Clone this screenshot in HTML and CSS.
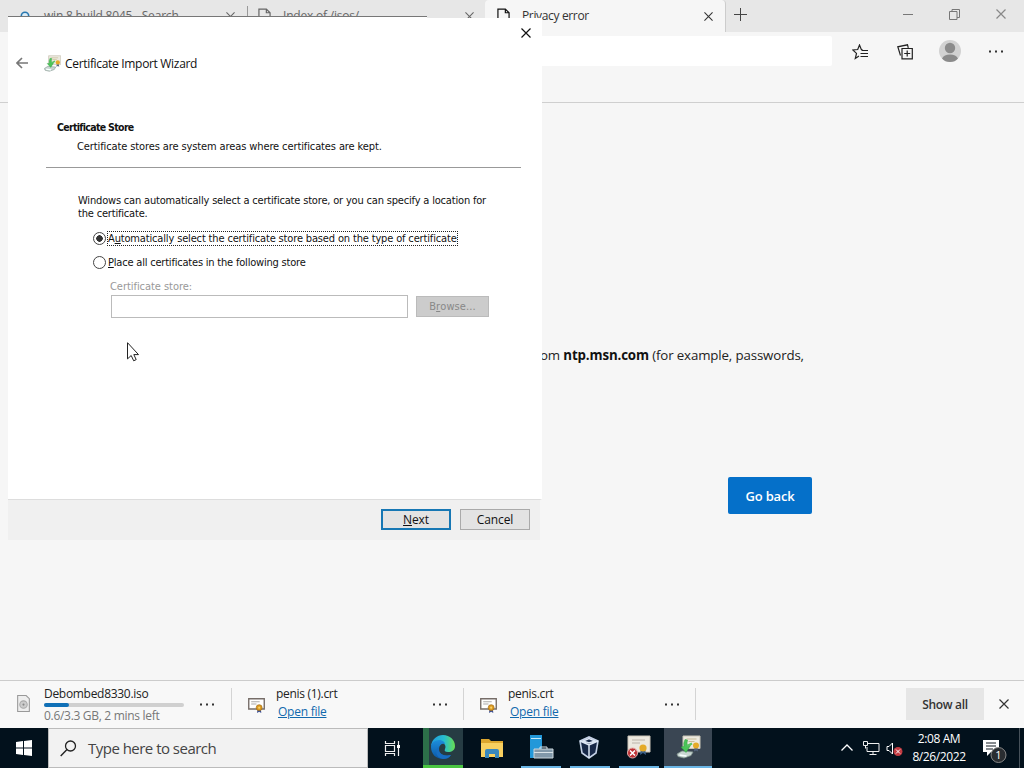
FILE: index.html
```html
<!DOCTYPE html>
<html lang="en">
<head>
<meta charset="utf-8">
<title>Privacy error</title>
<link rel="stylesheet" href="styles.css">
</head>
<body>
<svg width="0" height="0" class="defs">
  <symbol id="page" viewBox="0 0 14 16"><path d="M1 .5h8l4 4v11H1zM9 .5v4h4" fill="none" stroke="currentColor" stroke-width="1.3"/></symbol>
  <symbol id="x" viewBox="0 0 10 10"><path d="M.5.5l9 9M9.5.5l-9 9" fill="none" stroke="currentColor" stroke-width="1.2"/></symbol>
  <symbol id="dots" viewBox="0 0 14 3"><path d="M0 .5h2v2H0zM6 .5h2v2H6zM12 .5h2v2h-2z" fill="currentColor"/></symbol>
  <symbol id="cert" viewBox="0 0 16 14"><path d="M.7.7h14.6v9.6H.7z" fill="#fff" stroke="#766d68" stroke-width="1.3"/><path d="M3 3.5h8M3 5.5h5" stroke="#aaa"/><path d="M9 9l-.5 5 2-1.2 2 1.2L12 9z" fill="#3c4f91"/><circle cx="10.5" cy="9" r="2.8" fill="#dc9a20" stroke="#9c6a17" stroke-width=".6"/><circle cx="10.5" cy="9" r="1" fill="#f6d36b"/></symbol>
  <symbol id="wizard" viewBox="0 0 24 24"><path d="M6.500 1H23.500v12.500h-17z" fill="#ece9df" stroke="#c9c5b7"/><path d="M10 4h10M12 6.500h6" stroke="#c9bd98"/><path d="M18 13l-.5 3.500 2-1 2 1-.5-3.500z" fill="#56657f"/><circle cx="19.500" cy="10.500" r="3" fill="#e5ab28"/><path d="M.5 19l5-3 11 1-2 3.500-7 2.500-6-1.500z" fill="#c9d6d2" stroke="#82948e" stroke-width=".8"/><path d="M3 20l7 1" stroke="#f8ffff" stroke-width="1.600"/><path d="M8.500 4.500l2.500.5q-1 3 0 6l3-.5-4.500 7-5-5.500 3-.5q-1-3 1-7z" fill="#4bc458" stroke="#2f9a40" stroke-width=".5"/><path d="M10.500 11l5-2.500" stroke="#5bc564" stroke-width="2"/></symbol>
</svg>
<div class="desktop">
  <main class="browser">
    <div class="tabs">
      <div class="tab first"><svg class="search-dot" viewBox="0 0 10 10"><circle cx="5" cy="5" r="3.700" fill="#dcecf6" stroke="#2878b0" stroke-width="1.600"/></svg><span>win 8 build 8045 - Search</span><svg class="tab-x"><use href="#x"/></svg></div>
      <div class="tab second"><svg class="page"><use href="#page"/></svg><span>Index of /isos/</span><svg class="tab-x"><use href="#x"/></svg></div>
      <div class="tab active"><svg class="page"><use href="#page"/></svg><span>Privacy error</span><svg class="tab-x"><use href="#x"/></svg></div>
      <svg class="plus" viewBox="0 0 14 14"><path d="M6.500 0v13M0 6.500h13" stroke="#444"/></svg>
      <div class="window-controls"><svg width="10" height="11" viewBox="0 0 10 11"><path d="M0 5.500h10" stroke="#777"/></svg><svg width="11" height="11" viewBox="0 0 11 11"><path d="M.5 2.500h7.500v8H.5zM3 2.500v-2h7.500v8H8" fill="none" stroke="#777"/></svg><svg width="10" height="10" class="win-x"><use href="#x"/></svg></div>
    </div>
    <div class="toolbar">
      <div class="address"></div>
      <svg class="fav" viewBox="0 0 17 16"><path d="M10.500 5.500L9.300 5.500 7.500 1 5.700 5.500.8 6l3.700 3.400L3.300 14.500 7 12M9.500 6.500H16M8.500 9.500H16M8.500 12.500H16" fill="none" stroke="#222" stroke-width="1.200"/></svg>
      <svg class="collect" viewBox="0 0 16 16"><path d="M5 4.500h10.300v10.300H5zM10.200 6.500v6M7.200 9.500h6M3.500 11.500L.8 2.800 10.500.8l.8 3" fill="none" stroke="#222" stroke-width="1.200"/></svg>
      <svg class="avatar" viewBox="0 0 22 22"><circle cx="11" cy="11" r="11" fill="#d2d2d2"/><circle cx="11" cy="8" r="5.200" fill="#8b8b8b"/><path d="M3 18.500q2-4 8-4t8 4q-3 3.500-8 3.500t-8-3.500z" fill="#8b8b8b"/></svg>
      <svg class="dots"><use href="#dots"/></svg>
    </div>
    <div class="content">
      <p class="warning">om <b>ntp.msn.com</b> (for example, passwords,</p>
      <button class="go-back">Go back</button>
    </div>
    <div class="downloads">
      <div class="download progress-item">
        <svg class="iso" viewBox="0 0 12 16"><path d="M.5.500h8l3 3v12H.5z" fill="#eee" stroke="#999"/><circle cx="6" cy="9" r="3.500" fill="#ccc" stroke="#aaa"/><circle cx="6" cy="9" r="1" fill="#888"/></svg>
        <div class="info"><div class="name">Debombed8330.iso</div><div class="track"><div class="fill"></div></div><div class="status">0.6/3.3 GB, 2 mins left</div></div><svg class="dots"><use href="#dots"/></svg>
      </div>
      <div class="download"><svg class="cert"><use href="#cert"/></svg><div class="info"><div class="name">penis (1).crt</div><a class="link">Open file</a></div><svg class="dots"><use href="#dots"/></svg></div>
      <div class="download"><svg class="cert"><use href="#cert"/></svg><div class="info"><div class="name">penis.crt</div><a class="link">Open file</a></div><svg class="dots"><use href="#dots"/></svg></div>
      <button class="show-all">Show all</button><svg class="close-downloads"><use href="#x"/></svg>
    </div>
  </main>
  <footer class="taskbar">
    <div class="start"><svg width="16" height="16" viewBox="0 0 16 16"><path d="M0 2l7-1v6.500H0zM8 .900L16 0v7.500H8zM0 8.500h7V15l-7-1zM8 8.500h8V16l-8-1z" fill="#fff"/></svg></div>
    <div class="search"><svg viewBox="0 0 17 17"><circle cx="10.500" cy="6" r="5" fill="none" stroke="#222" stroke-width="1.300"/><path d="M7 9.500L.7 16" stroke="#222" stroke-width="1.400"/></svg><span>Type here to search</span></div>
    <div class="apps">
      <div class="app"><svg width="17" height="17" viewBox="0 0 17 17"><path d="M1.500 1v2.500h9V1M1.500 16v-2.500h9V16M1.500 5.500h9v6h-9zM14.500 1v15" fill="none" stroke="#eee" stroke-width="1.200"/><path d="M13 5h3v3h-3z" fill="#fff"/></svg></div>
      <div class="app edge"><svg width="26" height="26" viewBox="0 0 26 26"><defs><linearGradient id="g1" x2="1"><stop stop-color="#219bdc"/><stop offset=".55" stop-color="#27bed0"/><stop offset="1" stop-color="#68df50"/></linearGradient><linearGradient id="g2" y2="1" x2="0"><stop stop-color="#1d8edb"/><stop offset="1" stop-color="#0b57a6"/></linearGradient></defs><path d="M1 12C2 5 7 1 13 1c7 0 12 5 12 11 0 4-3 6-7 6-3 0-4-1-3-3 3-6-8-11-14-3z" fill="url(#g1)"/><path d="M1 13c0-4 4-7 8-7 3 0 6 2 6 4-3-1-6 1-6 5 0 5 5 8 12 6-2 3-5 4-8 4C6 25 1 20 1 13z" fill="url(#g2)"/><path d="M9 13c-2 5 3 10 12 8-2 3-5 4-8 4-7-1-9-9-4-12z" fill="#176dc1"/></svg></div>
      <div class="app"><svg width="22" height="19" viewBox="0 0 22 19"><path d="M0 0h8l2 2h12v16H0z" fill="#dca62e"/><path d="M0 4h22v14H0z" fill="#f8d060"/><path d="M4 19v-7q0-2 2-2h10q2 0 2 2v7h-4v-4H8v4z" fill="#3988bd"/></svg></div>
      <div class="app running"><svg width="25" height="24" viewBox="0 0 25 24"><path d="M1 0h12v23H1z" fill="#2298d9"/><path d="M2 3.500h10" stroke="#c4ebfa"/><path d="M5 14h19v9H5z" fill="#8198a9" stroke="#c9d6dc"/><path d="M11 14v-2h7v2M5 17.500h19" fill="none" stroke="#d8e2e7"/></svg></div>
      <div class="app running virtual"><svg width="20" height="23" viewBox="0 0 20 23"><path d="M1 5l9-4 9 4-2 12-7 5-7-5z" fill="#172847" stroke="#c4d1e5" stroke-width="1.600"/><path d="M1 5l9 4 9-4M10 9v13M4 5l6-2.500L16 5l-6 2z" fill="none" stroke="#dce6f4" stroke-width="1.500"/></svg></div>
      <div class="app running"><svg width="24" height="24" viewBox="0 0 24 24"><path d="M1 1h22v16H1z" fill="#ece8df" stroke="#cbc5b8"/><path d="M5 5h13M5 8h8" stroke="#bcb4aa"/><path d="M14 13l-1 7 3-2 3 2-1-7z" fill="#3c6189"/><circle cx="16" cy="13" r="3.600" fill="#e4aa28"/><circle cx="5.500" cy="18" r="5" fill="#bd3034" stroke="#e5b0ac"/><path d="M3 15.500l5 5M8 15.500l-5 5" stroke="#fff" stroke-width="1.500"/></svg></div>
      <div class="app running current"><svg width="25" height="24"><use href="#wizard"/></svg></div>
    </div>
    <div class="tray">
      <svg class="chev" viewBox="0 0 12 7"><path d="M.5 6.500L6 1l5.500 5.500" fill="none" stroke="#fff" stroke-width="1.300"/></svg>
      <svg class="network" viewBox="0 0 17 14"><path d="M5 2.500h11v8H4V6M10 10.500v3M6.500 13.500h7M.5.500h4v4h-4zM2.500 4.500v3" fill="none" stroke="#eee"/></svg>
      <svg class="volume" viewBox="0 0 17 14"><path d="M1 4.500h2L6.500 1v11L3 8.500H1z" fill="none" stroke="#fff"/><circle cx="12" cy="9.500" r="4.500" fill="#c33b42"/><path d="M10 7.500l4 4M14 7.500l-4 4" stroke="#fff"/></svg>
      <div class="clock"><span>2:08 AM</span><span class="date">8/26/2022</span></div>
      <svg class="notify" viewBox="0 0 25 26"><path d="M1 2h16v12H9l-4 4v-4H1z" fill="#fff"/><path d="M4 5h10M4 8h10M4 11h7" stroke="#101821"/><circle cx="16.500" cy="17" r="7.500" fill="#292d31" stroke="#888"/><text x="16.500" y="21" text-anchor="middle" fill="#fff" font-size="11">1</text></svg>
      <div class="desktop-edge"></div>
    </div>
  </footer>
  <section class="dialog">
    <div class="dialog-edge"></div>
    <svg class="dialog-close"><use href="#x"/></svg>
    <header class="wizard-head"><svg class="back" viewBox="0 0 12 12"><path d="M12 6H1M6 1L1 6l5 5" fill="none" stroke="#777" stroke-width="1.600"/></svg><svg class="wizard-icon"><use href="#wizard"/></svg><span>Certificate Import Wizard</span></header>
    <div class="wizard-body">
      <h1>Certificate Store</h1><p class="sub">Certificate stores are system areas where certificates are kept.</p>
      <div class="rule"></div>
      <p class="description">Windows can automatically select a certificate store, or you can specify a location for<br>the certificate.</p>
      <div class="option"><i class="radio selected"></i><span class="focused">A<u>u</u>tomatically select the certificate store based on the type of certificate</span></div>
      <div class="option option-two"><i class="radio"></i><span><u>P</u>lace all certificates in the following store</span></div>
      <p class="store-label">Certificate store:</p>
      <div class="store-row"><div class="store-input"></div><div class="browse">B<u>r</u>owse...</div></div>
    </div>
    <div class="wizard-footer"><button class="next"><span><u>N</u>ext</span></button><button><span>Cancel</span></button></div>
  </section>
  <svg class="cursor" viewBox="0 0 12 20"><path d="M.5.700v16.200l3.700-3.400 2.500 5.300 2.500-1.200-2.400-5h4.700z" fill="#fff" stroke="#222"/></svg>
</div>
</body>
</html>
```
FILE: styles.css
```css
* { box-sizing: border-box; }
body { margin: 0; font-family: "Open Sans", "Noto Sans", sans-serif; color: #222; }
p, h1 { margin: 0; }
button { font-family: inherit; padding: 0; border: 0; }
svg { flex: none; display: block; }
.defs { position: absolute; }
.desktop { position: relative; width: 1024px; height: 768px; overflow: hidden; white-space: nowrap; }
.browser { height: 728px; display: flex; flex-direction: column; background: #f6f6f6; }
.tabs { height: 32px; background: #e7e7e7; display: flex; flex: none; font-size: 12px; }
.tab { height: 32px; display: flex; align-items: center; color: #666; }
.tab span { line-height: 16px; }
.first { width: 247px; padding-left: 20px; }
.first span { width: 135px; margin-left: 14px; letter-spacing: -.2px; }
.search-dot { width: 10px; height: 10px; }
.first .tab-x { margin-left: 47px; }
.tab-x { width: 9px; height: 9px; }
.second { width: 238px; padding-left: 11px; }
.second::before { content: ""; width: 1px; height: 20px; background: #999; margin: 0 10px 0 -11px; }
.page { width: 13px; height: 16px; }
.second span { margin-left: 12px; width: 182px; letter-spacing: -.2px; }
.active { width: 241px; padding-left: 12px; background: #f6f6f6; color: #333; border-radius: 4px 4px 0 0; border-right: 1px solid #ccc; }
.active .page { color: #111; }
.active span { width: 182px; margin-left: 12px; letter-spacing: -.35px; }
.plus { width: 14px; height: 14px; margin: 8px 0 0 8px; }
.window-controls { margin: 9px 18px 0 auto; display: flex; gap: 36px; color: #888; }
.toolbar { height: 71px; flex: none; display: flex; align-items: flex-start; border-bottom: 1px solid #cfcfcf; padding-top: 4px; }
.address { width: 824px; margin-left: 8px; height: 30px; background: #fff; border-radius: 2px; }
.fav { width: 17px; height: 16px; margin: 8px 0 0 20px; }
.collect { width: 16px; height: 16px; margin: 8px 0 0 28px; }
.avatar { width: 22px; height: 22px; margin: 4px 0 0 26px; }
.toolbar .dots { margin: 14px 0 0 28px; }
.dots { width: 14px; height: 3px; color: #333; }
.content { flex: 1; padding: 243px 0 0 540px; }
.warning { font-size: 13.3px; line-height: 18px; letter-spacing: -.14px; }
.warning b { color: #111; }
.go-back { display: block; width: 84px; height: 37px; margin: 113px 0 0 188px; border-radius: 2px; color: #fff; background: #0570c9; font-size: 13px; font-weight: 600; letter-spacing: -.2px; }
.downloads { height: 48px; flex: none; border-top: 1px solid #ccc; background: #f8f8f8; display: flex; padding-top: 7px; }
.download { width: 232px; height: 32px; border-right: 1px solid #d4d4d4; display: flex; padding: 0 15px 0 16px; }
.cert { width: 17px; height: 15px; margin: 10px 11px 0 0; }
.info { flex: none; width: 157px; font-size: 12px; }
.name { line-height: 13px; margin-top: -1px; letter-spacing: -.3px; }
.link { display: block; margin: 5px 0 0 2px; line-height: 14px; color: #1169ad; text-decoration: underline; letter-spacing: -.25px; }
.download .dots { margin-top: 15px; }
.progress-item .iso { width: 13px; height: 17px; margin: 7px 13px 0 1px; }
.progress-item .iso + .info { margin-left: 1px; width: 156px; }
.track { width: 140px; height: 4px; border-radius: 2px; margin: 3px 0 2px; background: #d0d0d0; }
.fill { width: 25px; height: 4px; background: #1070b7; border-radius: 2px; }
.status { line-height: 14px; color: #777; font-size: 12px; letter-spacing: -.3px; }
.show-all { width: 78px; height: 32px; margin: 0 15px 0 auto; background: #e6e6e6; font-weight: 600; font-size: 12px; color: #333; letter-spacing: -.35px; }
.close-downloads { width: 10px; height: 10px; margin: 11px 15px 0 0; color: #333; }
.taskbar { height: 40px; display: flex; background: #02111c; color: #fff; }
.start { width: 48px; display: grid; place-items: center; }
.search { width: 320px; background: #f2f2f2; border: 1px solid #bbb; color: #444; display: flex; align-items: center; font-size: 15px; padding-left: 11px; }
.search svg { width: 17px; height: 17px; margin-right: 11px; }
.search span { letter-spacing: -.52px; }
.apps { display: flex; gap: 9px; margin-left: 4px; }
.app { width: 40px; height: 40px; display: grid; place-items: center; }
.app:first-child { margin-right: 2px; }
.edge { background: linear-gradient(90deg, #2c6f49 0 6px, #263c43 6px); border-bottom: 3px solid #4ac441; }
.running { border-bottom: 2px solid #6ab5e5; }
.virtual { padding-right: 3px; }
.current { background: #3a4653; width: 48px; margin-left: -4px; }
.tray { display: flex; margin-left: auto; }
.chev { width: 12px; height: 7px; margin: 16px 10px 0 0; }
.network { width: 17px; height: 14px; margin: 13px 6px 0 0; }
.volume { width: 17px; height: 14px; margin: 14px 8px 0 0; }
.clock { width: 56px; display: flex; flex-direction: column; align-items: center; font-size: 12px; line-height: 18px; padding-top: 2px; letter-spacing: -.4px; }
.notify { width: 25px; height: 26px; margin: 10px 0 0 15px; }
.desktop-edge { width: 5px; margin-left: 12px; border-left: 1px solid #46515a; }
.dialog { position: absolute; left: 8px; top: 16px; width: 534px; height: 524px; background: linear-gradient(#fff, #fff) 0 2px no-repeat; font-family: "DejaVu Sans Condensed", "DejaVu Sans", sans-serif; font-size: 11px; font-stretch: condensed; color: #111; display: flex; flex-direction: column; }
.dialog-edge { width: 419px; height: 2px; border-top: 1px solid #777; background: #fff; }
.dialog-close { position: absolute; right: 11px; top: 12px; width: 10px; height: 10px; }
.wizard-head { height: 32px; display: flex; align-items: center; padding-left: 8px; margin-top: 29px; font: 12px "Open Sans", sans-serif; letter-spacing: -.32px; }
.back { width: 12px; height: 12px; }
.wizard-icon { width: 17px; height: 17px; margin: 0 4px 0 16px; }
.wizard-body { height: 420px; padding: 43px 0 0 38px; letter-spacing: -.18px; }
.wizard-body h1 { font-size: 10.5px; line-height: 13px; margin: -1px 0 0 11px; letter-spacing: -.68px; }
.sub { line-height: 13px; margin: 6px 0 0 31px; letter-spacing: -.11px; }
.rule { width: 475px; height: 1px; background: #999; margin-top: 14px; }
.description { line-height: 13px; margin: 26px 0 0 32px; }
.option { height: 15px; margin: 11px 0 0 47px; display: flex; align-items: center; }
.option-two { margin-top: 9px; letter-spacing: -.2px; }
.radio { width: 13px; height: 13px; border: 1px solid #444; border-radius: 50%; margin: -1px 2px 0 0; flex: none; }
.selected { background: radial-gradient(circle, #333 0 3px, #fff 3.500px); }
.focused { outline: 1px dotted #222; line-height: 13px; letter-spacing: -.155px; }
u { text-underline-offset: 1px; }
.store-label { color: #999; line-height: 13px; margin: 10px 0 2px 64px; letter-spacing: -.05px; }
.store-row { display: flex; gap: 8px; margin-left: 65px; }
.store-input { width: 297px; height: 23px; border: 1px solid #bbb; }
.browse { width: 73px; height: 21px; margin-top: 1px; border: 1px solid #bbb; background: #ccc; color: #888; display: grid; grid-auto-flow: column; justify-content: center; align-items: center; letter-spacing: .1px; }
.wizard-footer { height: 41px; border-top: 1px solid #ddd; border-right: 2px solid #f6f6f6; background: #f0f0f0; display: flex; gap: 9px; padding: 9px 0 0 373px; }
.wizard-footer button { width: 70px; height: 21px; border: 1px solid #aaa; background: #e3e3e3; color: #111; font-family: "Open Sans", sans-serif; font-size: 12px; letter-spacing: -.1px; }
.wizard-footer .next { border: 2px solid #1677b4; }
.cursor { position: absolute; left: 127px; top: 342px; width: 12px; height: 20px; }
```
